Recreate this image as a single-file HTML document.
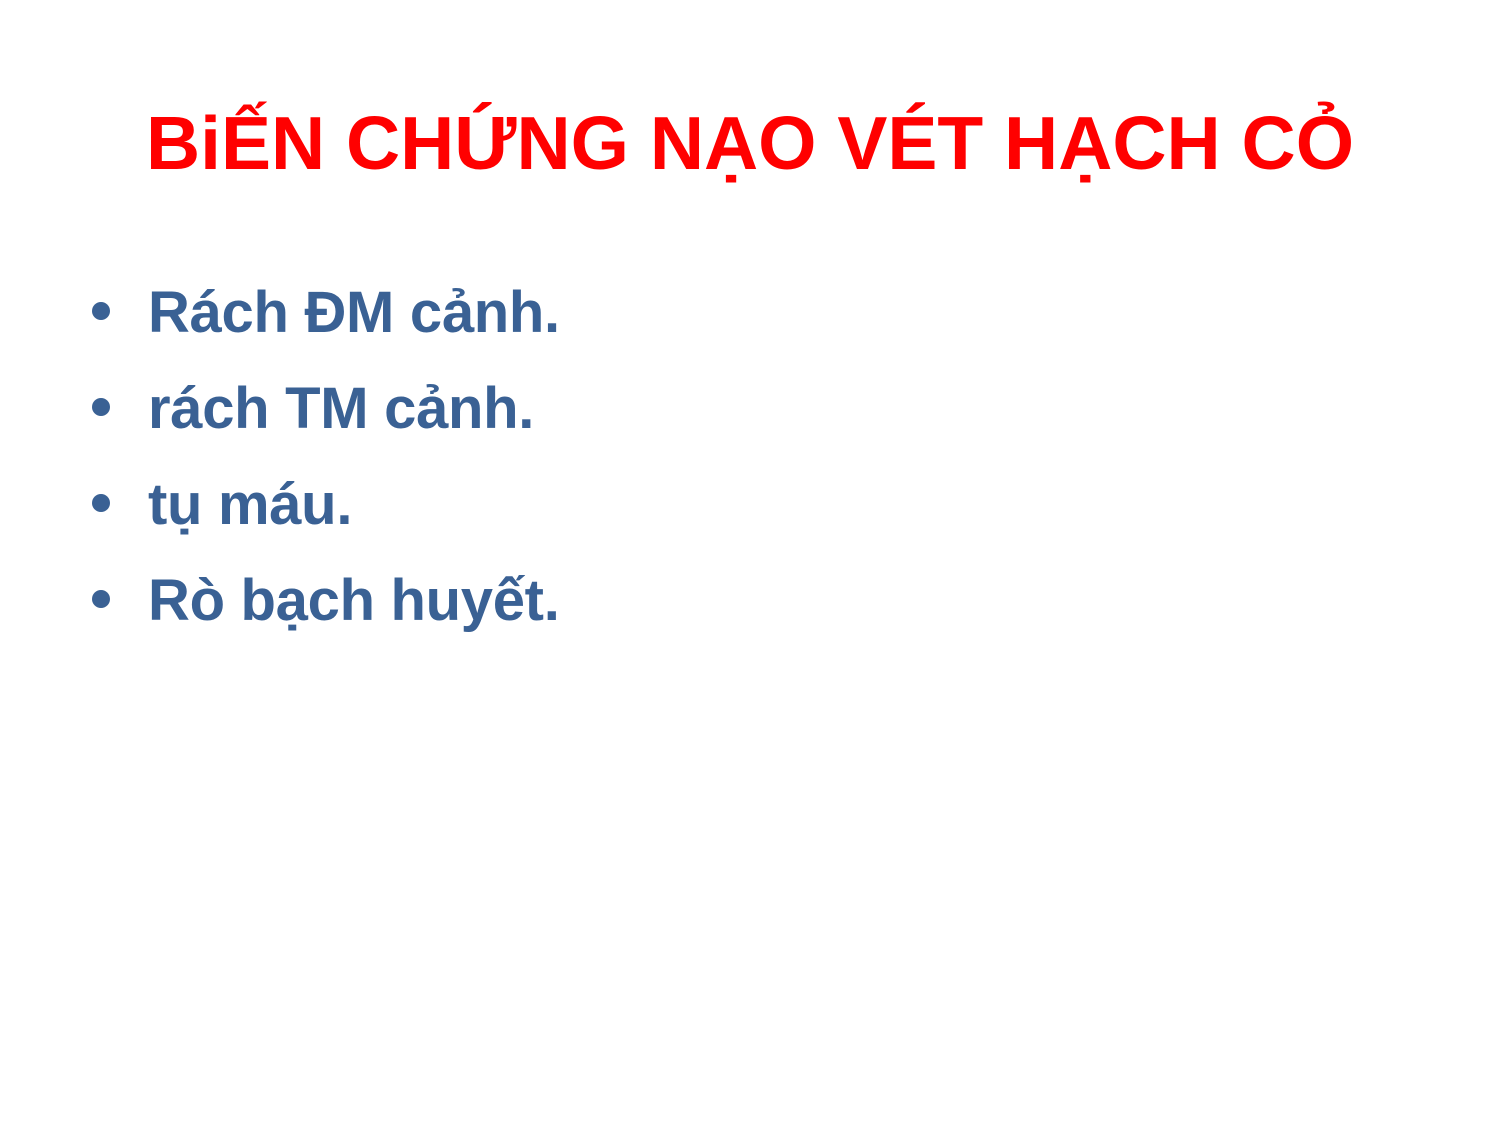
<!DOCTYPE html>
<html><head><meta charset="utf-8"><style>
html,body{margin:0;padding:0;background:#fff;width:1500px;height:1125px;overflow:hidden;position:relative}
.t{position:absolute;left:0;width:1500px;top:100px;text-align:center;font:bold 75px "Liberation Sans",sans-serif;color:#ff0000;white-space:nowrap}
.b{position:absolute;left:148px;font:bold 58px "Liberation Sans",sans-serif;color:#3a6194;white-space:nowrap;letter-spacing:-0.3px}
.d{position:absolute;left:92px;width:18px;height:18px;border-radius:50%;background:#3a6194}
</style></head><body>
<div class="t">BiẾN CHỨNG NẠO VÉT HẠCH CỎ</div>
<div class="d" style="top:302px"></div><div class="b" style="top:279px">Rách ĐM cảnh.</div>
<div class="d" style="top:398px"></div><div class="b" style="top:375px">rách TM cảnh.</div>
<div class="d" style="top:494px"></div><div class="b" style="top:471px">tụ máu.</div>
<div class="d" style="top:590px"></div><div class="b" style="top:567px">Rò bạch huyết.</div>
</body></html>
